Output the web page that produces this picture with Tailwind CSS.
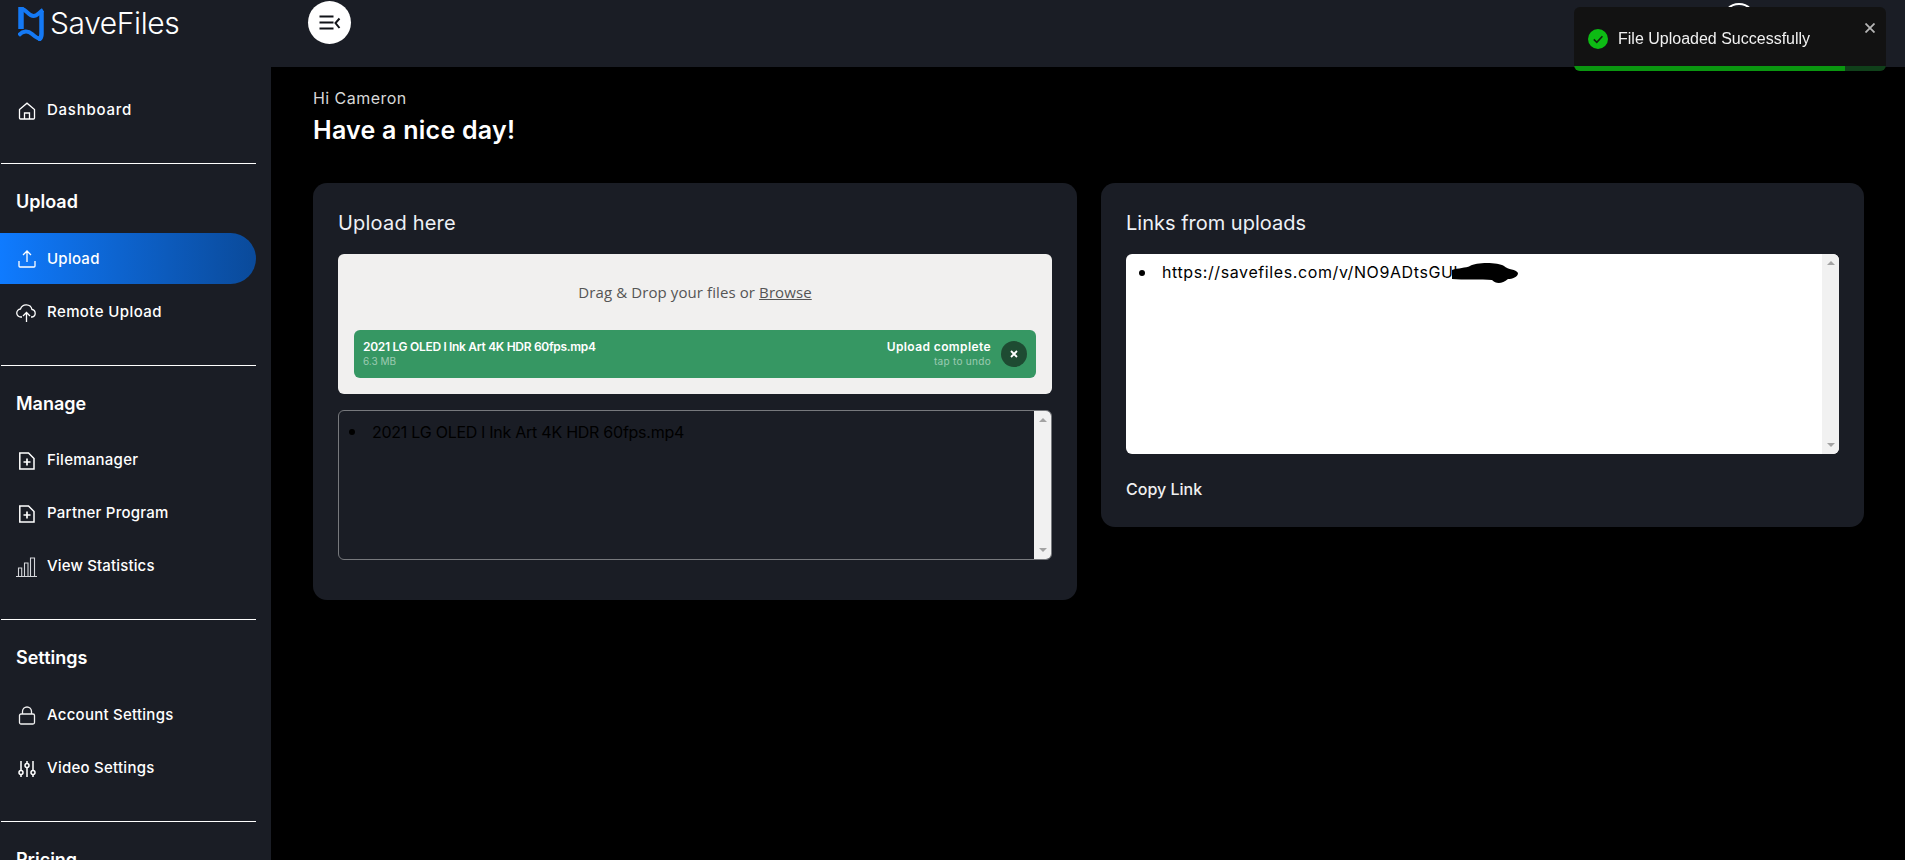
<!DOCTYPE html>
<html lang="en">
<head>
<meta charset="utf-8">
<title>SaveFiles</title>
<script src="https://cdn.jsdelivr.net/npm/@tailwindcss/browser@4"></script>
</head>
<body class="h-screen overflow-hidden bg-black font-['Inter',sans-serif] text-white">

  <!-- Toast -->
  <div class="fixed top-[7px] right-[19px] w-[312px] h-[64px] z-20 bg-[#121212] rounded-[6px] overflow-hidden font-['Liberation_Sans',sans-serif]">
    <div class="flex items-center h-[59px] pl-[11px] pt-[4px]">
      <svg class="w-[20px] h-[20px] mr-[10px] ml-[3px]" viewBox="0 0 20 20"><circle cx="10" cy="10" r="10" fill="#0dbb14"/><path d="M5.800 10.400l3 3 5.600-6.200" fill="none" stroke="#10240f" stroke-width="1.600"/></svg>
      <span class="text-[16px] text-[#f1f1f1]">File Uploaded Successfully</span>
    </div>
    <svg class="absolute top-[16px] right-[11px] w-[10px] h-[10px]" viewBox="0 0 10 10"><path d="M0.500 0.500l9 9M9.500 0.500l-9 9" stroke="#b5b5b5" stroke-width="1.800"/></svg>
    <div class="flex h-[5px]">
      <div class="w-[271px] bg-[#0a9610]"></div>
      <div class="flex-1 bg-[#10401a]"></div>
    </div>
  </div>

  <!-- Header -->
  <header class="flex items-start h-[67px] bg-[#1a1d25]">
    <div class="w-[271px] flex items-center pl-[18px] pt-[5px]">
      <svg class="w-[27px] h-[35px]" viewBox="0 0 27 35" fill="none" stroke="#1479f5">
        <path d="M3 1V23" stroke-width="5.500"/>
        <path d="M3 3C9 3 10 10 15.500 10C19 10 21 6.500 25 4" stroke-width="4"/>
        <path d="M23.500 5V28C23.500 31 22.500 33 20 33.500" stroke-width="4.500"/>
        <path d="M0.500 29.500C5 24.500 10 24.500 14 28C18 31.500 20 33 23 33" stroke-width="4"/>
      </svg>
      <span class="ml-[5px] text-[30px] leading-[36px] font-light tracking-[-0.4px]">SaveFiles</span>
    </div>
    <button class="mt-[1px] ml-[37px] w-[43px] h-[43px] rounded-full bg-white flex items-center justify-center">
      <svg class="w-[22px] h-[16px]" viewBox="0 0 22 16" fill="none" stroke="#111318" stroke-width="2"><path d="M0.500 1.500h14M0.500 7.500h14M0.500 13.500h14"/><path d="M20.500 3.500L16.500 8l4 5"/></svg>
    </button>
    <div class="ml-[1371px] mt-[3px] w-[34px] h-[34px] rounded-full border-2 border-white"></div>
  </header>

  <div class="flex h-[793px]">
    <!-- Sidebar -->
    <aside class="w-[271px] shrink-0 bg-[#1a1d25] overflow-hidden">
      <a class="flex items-center h-[53px] mt-[17px] pl-[18px] text-[15px] font-medium tracking-[0.75px]">
        <svg class="w-[18px] h-[18px] mr-[11px]" viewBox="0 0 18 18" fill="none" stroke="white" stroke-width="1.300"><path d="M1.500 7.500L9 1.200l7.500 6.300V16a1 1 0 0 1-1 1h-13a1 1 0 0 1-1-1z"/><path d="M6.500 17v-6h5v6"/></svg>
        Dashboard
      </a>
      <div class="ml-[1px] w-[255px] border-t border-white mt-[26px]"></div>
      <h3 class="pl-[16px] mt-[26px] h-[24px] leading-[24px] text-[18px] font-semibold">Upload</h3>
      <a class="flex items-center h-[51px] w-[256px] mt-[19px] pl-[18px] pt-[1px] rounded-r-full bg-gradient-to-r from-[#0f7bff] to-[#0a4a9a] text-[15px] font-medium tracking-[0.25px]">
        <svg class="w-[18px] h-[18px] mr-[11px]" viewBox="0 0 18 18" fill="none" stroke="white" stroke-width="1.300"><path d="M9 12V1.500M5 5l4-4 4 4"/><path d="M1 11v5a1 1 0 0 0 1 1h14a1 1 0 0 0 1-1v-5"/></svg>
        Upload
      </a>
      <a class="flex items-center h-[53px] mt-[2px] pl-[16px] text-[15px] font-medium tracking-[0.4px]">
        <svg class="w-[21px] h-[18px] mr-[10px]" viewBox="0 0 21 18" fill="none" stroke="white" stroke-width="1.300"><path d="M6 13H5a4 4 0 0 1-.500-8A6 6 0 0 1 16 5.500 3.800 3.800 0 0 1 16 13h-1"/><path d="M10.500 18V9M7 12l3.500-3.500L14 12"/></svg>
        Remote Upload
      </a>
      <div class="ml-[1px] w-[255px] border-t border-white mt-[26px]"></div>
      <h3 class="pl-[16px] mt-[26px] h-[24px] leading-[24px] text-[18px] font-semibold">Manage</h3>
      <a class="flex items-center h-[53px] mt-[18px] pl-[18px] text-[15px] font-medium tracking-[0.25px]">
        <svg class="w-[18px] h-[18px] mr-[11px]" viewBox="0 0 18 18" fill="none" stroke="white" stroke-width="1.500"><path d="M1.800 1H10.500L16 6.500V17H1.800z"/><path d="M9 6.500v7M5.500 10h7" stroke-width="1.700"/></svg>
        Filemanager
      </a>
      <a class="flex items-center h-[53px] pl-[18px] text-[15px] font-medium tracking-[0.25px]">
        <svg class="w-[18px] h-[18px] mr-[11px]" viewBox="0 0 18 18" fill="none" stroke="white" stroke-width="1.500"><path d="M1.800 1H10.500L16 6.500V17H1.800z"/><path d="M9 6.500v7M5.500 10h7" stroke-width="1.700"/></svg>
        Partner Program
      </a>
      <a class="flex items-center h-[53px] pl-[16px] text-[15px] font-medium tracking-[0.15px]">
        <svg class="w-[21px] h-[20px] mr-[10px]" viewBox="0 0 21 20" fill="none" stroke="#d4d6da" stroke-width="1.100"><path d="M0 19.500h21M2.500 19v-8h3.200v8M8.500 19V6h3.500v13M14.500 19V1h4v18"/></svg>
        View Statistics
      </a>
      <div class="ml-[1px] w-[255px] border-t border-white mt-[26px]"></div>
      <h3 class="pl-[16px] mt-[26px] h-[24px] leading-[24px] text-[18px] font-semibold">Settings</h3>
      <a class="flex items-center h-[53px] mt-[19px] pl-[18px] text-[15px] font-medium tracking-[0.25px]">
        <svg class="w-[18px] h-[19px] mr-[11px]" viewBox="0 0 18 19" fill="none" stroke="#f0f0f0" stroke-width="1.300"><rect x="1.500" y="8" width="15" height="10" rx="1.500"/><path d="M4.500 8V5.500a4.500 4.500 0 0 1 9 0V8"/></svg>
        Account Settings
      </a>
      <a class="flex items-center h-[53px] pl-[18px] text-[15px] font-medium tracking-[0.25px]">
        <svg class="w-[18px] h-[18px] mr-[11px]" viewBox="0 0 18 18" fill="none" stroke="white" stroke-width="1.500"><path d="M3 1v9M3 15v2M9 1v2M9 8v9M15 1v9M15 15v2"/><circle cx="3" cy="12.500" r="2"/><circle cx="9" cy="5.500" r="2"/><circle cx="15" cy="12.500" r="2"/></svg>
        Video Settings
      </a>
      <div class="ml-[1px] w-[255px] border-t border-white mt-[26px]"></div>
      <h3 class="pl-[16px] mt-[26px] h-[24px] leading-[24px] text-[18px] font-semibold">Pricing</h3>
    </aside>

    <!-- Main -->
    <main class="flex-1 pl-[42px] pr-[41px] pt-[21px]">
      <p class="text-[16px] leading-[20px] tracking-[0.45px] text-[#d8d8d8]">Hi Cameron</p>
      <h1 class="mt-[6px] text-[25px] leading-[32px] tracking-[0.25px] font-semibold">Have a nice day!</h1>

      <div class="grid grid-cols-[764px_763px] gap-[24px] items-start mt-[37px]">
        <!-- Upload card -->
        <section class="bg-[#1a1d25] rounded-[14px] h-[417px] px-[25px] pt-[27px]">
          <h2 class="text-[20px] leading-[26px] tracking-[0.2px] text-[#eef1f6]">Upload here</h2>
          <div class="mt-[18px] h-[140px] bg-[#f1f0ef] rounded-[6px] px-[16px] pt-[26px]">
            <p class="text-center text-[15px] leading-[24px] tracking-[0.1px] text-[#555] font-['Open_Sans',sans-serif]">Drag &amp; Drop your files or <span class="underline">Browse</span></p>
            <div class="mt-[26px] h-[48px] bg-[#369763] rounded-[6px] flex items-center pl-[9px] pr-[9px]">
              <div class="flex-1 mb-[2px]">
                <p class="text-[12px] leading-[16px] tracking-[-0.3px] font-semibold">2021 LG OLED l Ink Art 4K HDR 60fps.mp4</p>
                <p class="text-[10px] leading-[13px] text-white/50">6.3 MB</p>
              </div>
              <div class="text-right mr-[10px] mb-[2px]">
                <p class="text-[12px] leading-[16px] tracking-[0.4px] font-semibold">Upload complete</p>
                <p class="text-[10px] leading-[13px] tracking-[0.3px] text-white/50">tap to undo</p>
              </div>
              <div class="w-[26px] h-[26px] rounded-full bg-[#1e4b32] flex items-center justify-center">
                <svg class="w-[8px] h-[8px]" viewBox="0 0 8 8"><path d="M1 1l6 6M7 1l-6 6" stroke="white" stroke-width="1.800"/></svg>
              </div>
            </div>
          </div>
          <div class="mt-[16px] flex h-[150px] border border-[#77797d] rounded-[6px] overflow-hidden">
            <div class="flex-1 flex items-start pl-[10px] pt-[9px] text-[16px] leading-[24px] tracking-[-0.25px] text-black">
              <span class="mt-[9px] w-[6px] h-[6px] rounded-full bg-black mr-[17px]"></span>
              <span>2021 LG OLED l Ink Art 4K HDR 60fps.mp4</span>
            </div>
            <div class="w-[17px] bg-[#f1f1f1] flex flex-col items-center justify-between py-[7px]">
              <span class="w-0 h-0 border-x-[4px] border-x-transparent border-b-[4px] border-b-[#a3a3a3]"></span>
              <span class="w-0 h-0 border-x-[4px] border-x-transparent border-t-[4px] border-t-[#a3a3a3]"></span>
            </div>
          </div>
        </section>

        <!-- Links card -->
        <section class="bg-[#1a1d25] rounded-[14px] h-[344px] px-[25px] pt-[27px]">
          <h2 class="text-[20px] leading-[26px] text-[#eef1f6]">Links from uploads</h2>
          <div class="mt-[18px] flex h-[200px] bg-white rounded-[6px] overflow-hidden">
            <div class="relative flex-1 flex items-start pl-[13px] pt-[6px] text-[16px] leading-[24px] tracking-[0.6px] text-black">
              <span class="mt-[10px] w-[6px] h-[6px] rounded-full bg-black mr-[17px]"></span>
              <span>https://savefiles.com/v/NO9ADtsGUk</span>
              <!-- redacted part of the link -->
              <svg class="absolute left-[326px] top-[8px] w-[66px] h-[22px]" viewBox="0 0 66 22"><path d="M0 8C6 6 14 6 18 4C24 0 46 0 52 4C56 8 64 7 66 11C66 15 60 17 56 17C50 22 44 22 40 18C30 17 10 18 0 17Z" fill="black"/></svg>
            </div>
            <div class="w-[17px] bg-[#f1f1f1] flex flex-col items-center justify-between py-[7px]">
              <span class="w-0 h-0 border-x-[4px] border-x-transparent border-b-[4px] border-b-[#a3a3a3]"></span>
              <span class="w-0 h-0 border-x-[4px] border-x-transparent border-t-[4px] border-t-[#a3a3a3]"></span>
            </div>
          </div>
          <button class="block mt-[24px] text-[16px] leading-[22px] font-medium text-[#f0f0f0]">Copy Link</button>
        </section>
      </div>
    </main>
  </div>

</body>
</html>
